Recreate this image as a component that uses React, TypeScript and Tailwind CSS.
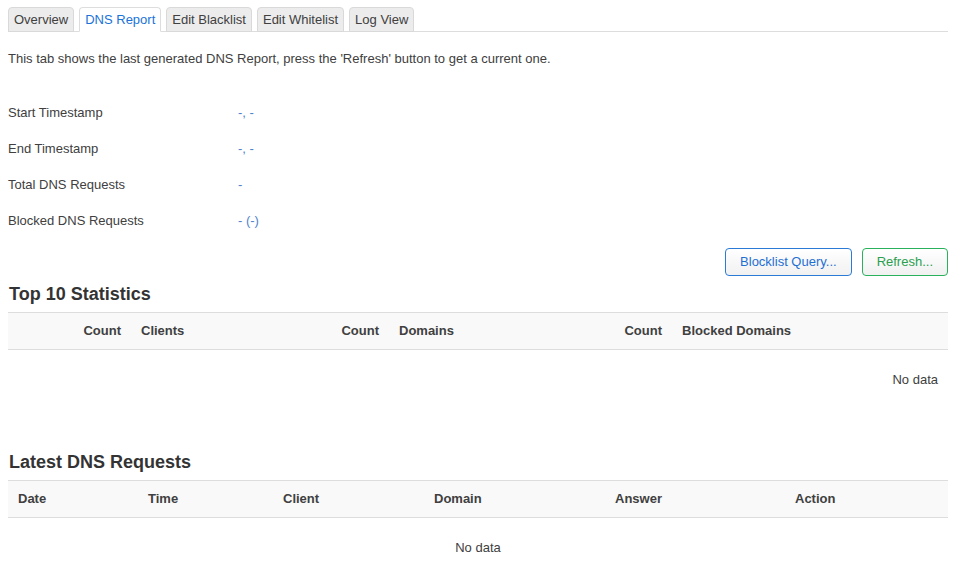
const tabs = ['Overview', 'DNS Report', 'Edit Blacklist', 'Edit Whitelist', 'Log View'];

const summary = [
  { label: 'Start Timestamp', value: '-, -' },
  { label: 'End Timestamp', value: '-, -' },
  { label: 'Total DNS Requests', value: '-' },
  { label: 'Blocked DNS Requests', value: '- (-)' },
];

const topCols = [
  { label: 'Count', w: 'w-[123px]', right: true },
  { label: 'Clients', w: 'w-[198px]', right: false },
  { label: 'Count', w: 'w-[60px]', right: true },
  { label: 'Domains', w: 'w-[223px]', right: false },
  { label: 'Count', w: 'w-[60px]', right: true },
  { label: 'Blocked Domains', w: 'flex-1', right: false },
];

const latestCols = [
  { label: 'Date', w: 'w-[130px]' },
  { label: 'Time', w: 'w-[135px]' },
  { label: 'Client', w: 'w-[151px]' },
  { label: 'Domain', w: 'w-[181px]' },
  { label: 'Answer', w: 'w-[180px]' },
  { label: 'Action', w: 'flex-1' },
];

export default function App() {
  return (
    <div className="min-h-screen bg-white text-[#404040] text-[13px] leading-[18px] font-['Liberation_Sans',Arial,sans-serif]">
      <div className="w-[940px] ml-2 pt-[7px]">
        {/* Tabs */}
        <ul className="flex gap-[5px] border-b border-[#dddddd]">
          {tabs.map((t) => {
            const active = t === 'DNS Report';
            return (
              <li
                key={t}
                className={`-mb-px h-[25px] px-[5px] flex items-center rounded-t-[4px] border ${
                  active
                    ? 'bg-white border-[#dddddd] border-b-white text-[#1a73d9]'
                    : 'bg-[#ececec] border-[#d9d9d9] text-[#404040]'
                }`}
              >
                {t}
              </li>
            );
          })}
        </ul>

        <p className="mt-[18px]">
          This tab shows the last generated DNS Report, press the 'Refresh' button to get a current one.
        </p>

        {/* Summary */}
        <div className="mt-[27px]">
          {summary.map((row) => (
            <div key={row.label} className="flex items-center h-[36px]">
              <div className="w-[230px]">{row.label}</div>
              <div className="text-[#4f84cc]">{row.value}</div>
            </div>
          ))}
        </div>

        <div className="mt-[9px] flex justify-end gap-[10px]">
          <button className="h-[28px] px-[14px] rounded-[4px] border border-[#2b7bd6] text-[#1f6fd3] bg-gradient-to-b from-white to-[#f1f1f1]">
            Blocklist Query...
          </button>
          <button className="h-[28px] px-[14px] rounded-[4px] border border-[#2ab15c] text-[#2a9f4f] bg-gradient-to-b from-white to-[#f1f1f1]">
            Refresh...
          </button>
        </div>

        {/* Top 10 */}
        <h3 className="mt-[7px] ml-px text-[18px] leading-[22px] font-bold text-[#333333]">Top 10 Statistics</h3>
        <div className="mt-[7px] flex h-[38px] items-center bg-[#f9f9f9] border-y border-[#dddddd] font-bold">
          {topCols.map((c, i) => (
            <div key={i} className={`${c.w} px-[10px] ${c.right ? 'text-right' : ''}`}>
              {c.label}
            </div>
          ))}
        </div>
        <div className="pt-[21px] pr-[10px] text-right">No data</div>

        {/* Latest */}
        <h3 className="mt-[62px] ml-px text-[18px] leading-[22px] font-bold text-[#333333]">Latest DNS Requests</h3>
        <div className="mt-[7px] flex h-[38px] items-center bg-[#f9f9f9] border-y border-[#dddddd] font-bold">
          {latestCols.map((c) => (
            <div key={c.label} className={`${c.w} px-[10px]`}>
              {c.label}
            </div>
          ))}
        </div>
        <div className="pt-[21px] text-center">No data</div>
      </div>
    </div>
  );
}
